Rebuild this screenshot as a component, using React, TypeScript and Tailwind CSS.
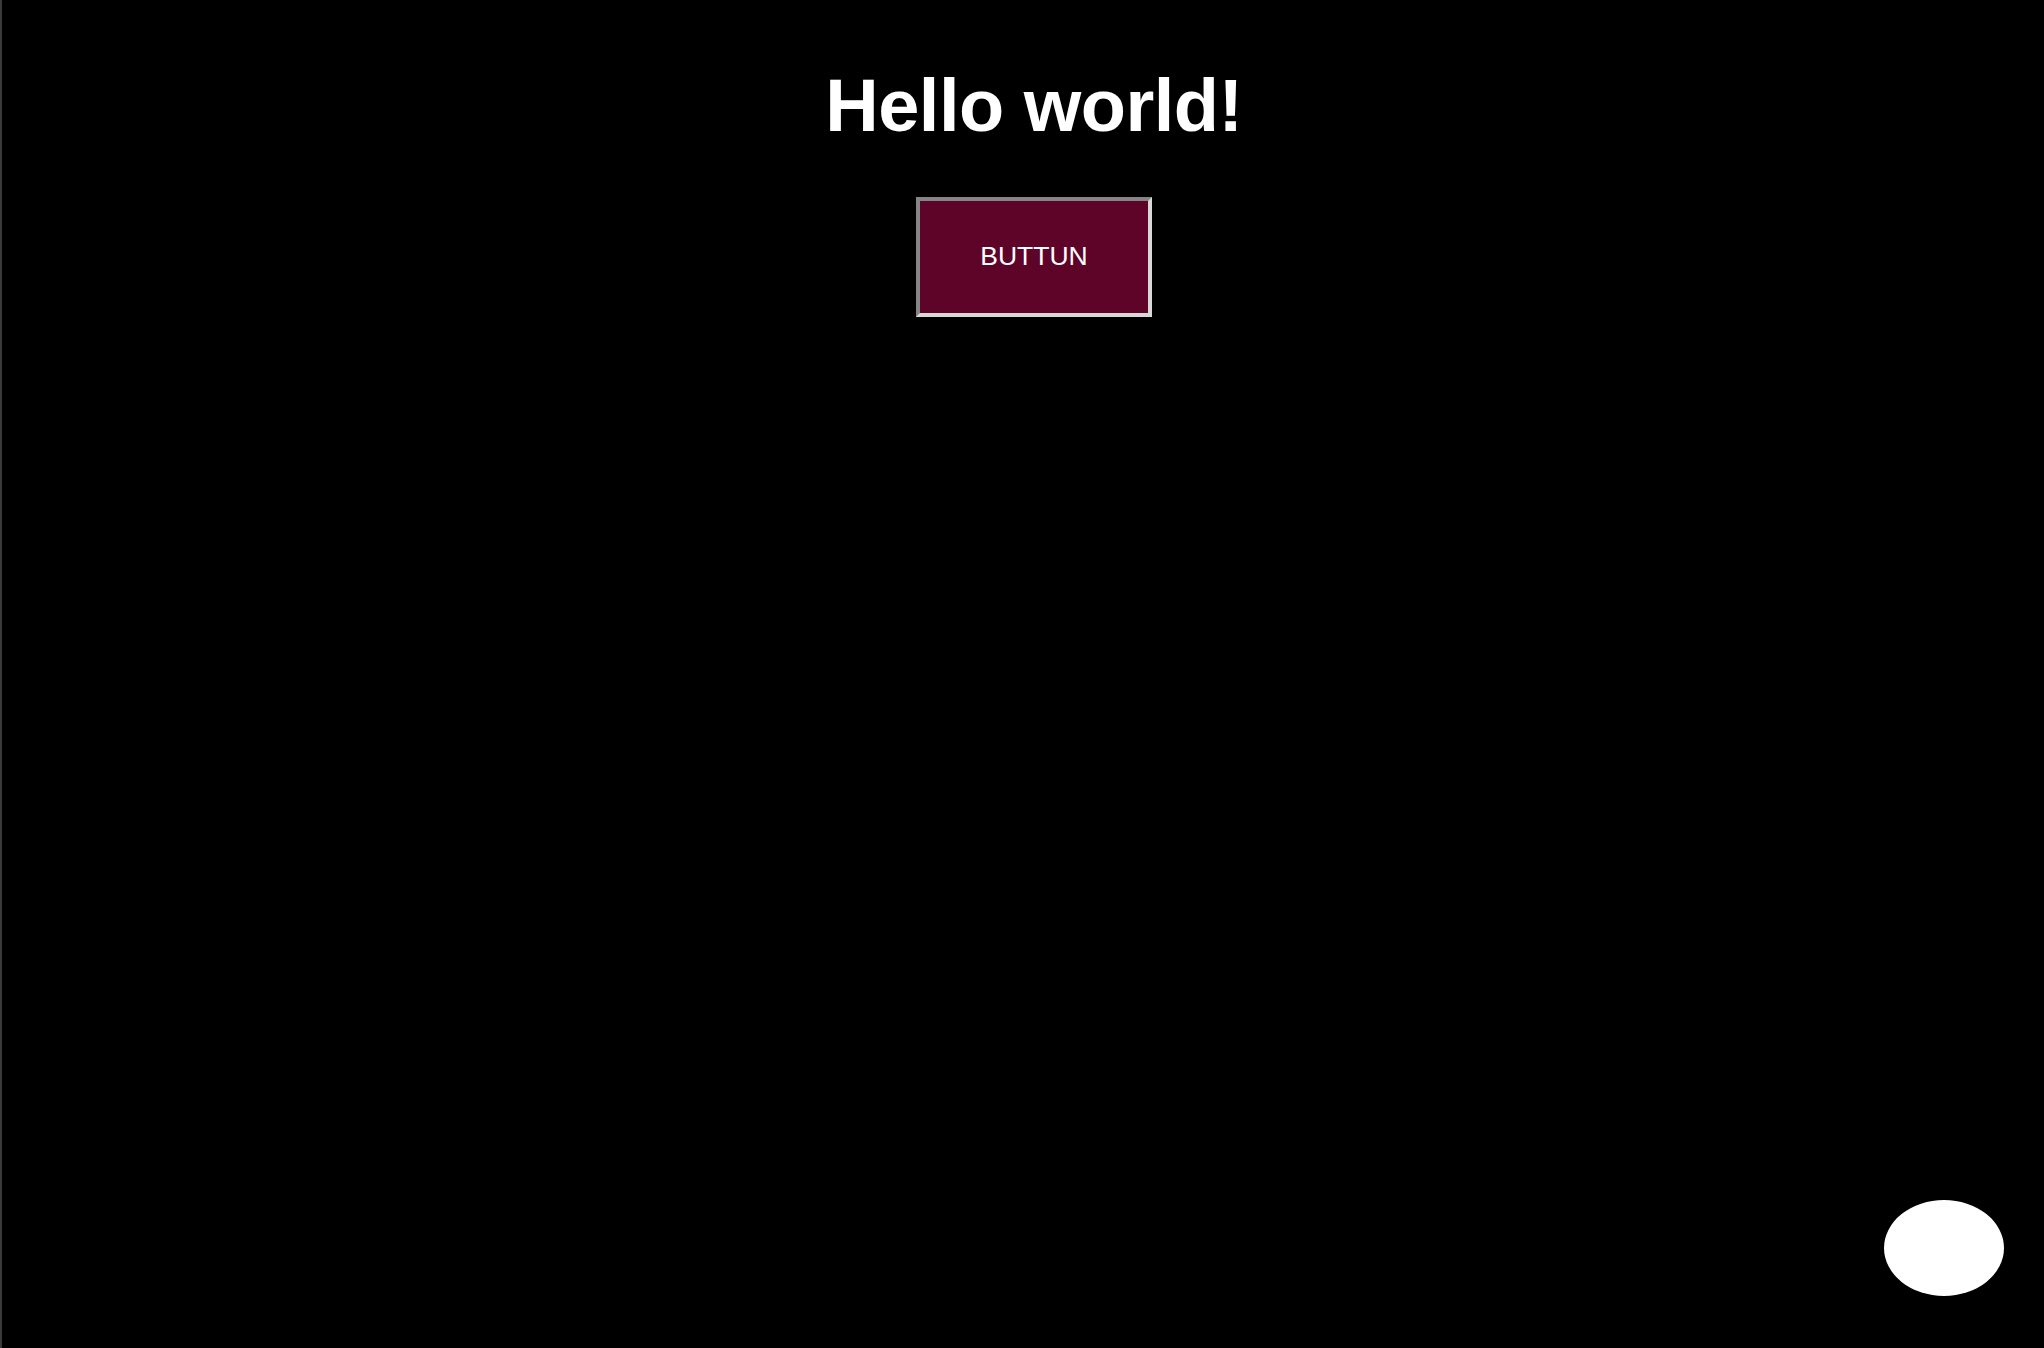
export default function App() {
  return (
    <div
      className="relative min-h-screen bg-black border-l-2 border-[#3a3a3a] flex flex-col items-center pl-[22px]"
      style={{ fontFamily: '"Liberation Sans", Arial, sans-serif' }}
    >
      <h1 className="mt-[69px] text-[74px] leading-none font-bold text-white tracking-[-0.5px]">
        Hello world!
      </h1>
      <button className="mt-[54px] w-[236px] h-[120px] bg-[#5e0429] text-white text-[26.5px] border-4 border-t-[#858585] border-l-[#858585] border-b-[#d8d8d8] border-r-[#d8d8d8]">
        BUTTUN
      </button>
      <div className="fixed right-[40px] bottom-[52px] w-[120px] h-[96px] rounded-[50%] bg-white" />
    </div>
  );
}
